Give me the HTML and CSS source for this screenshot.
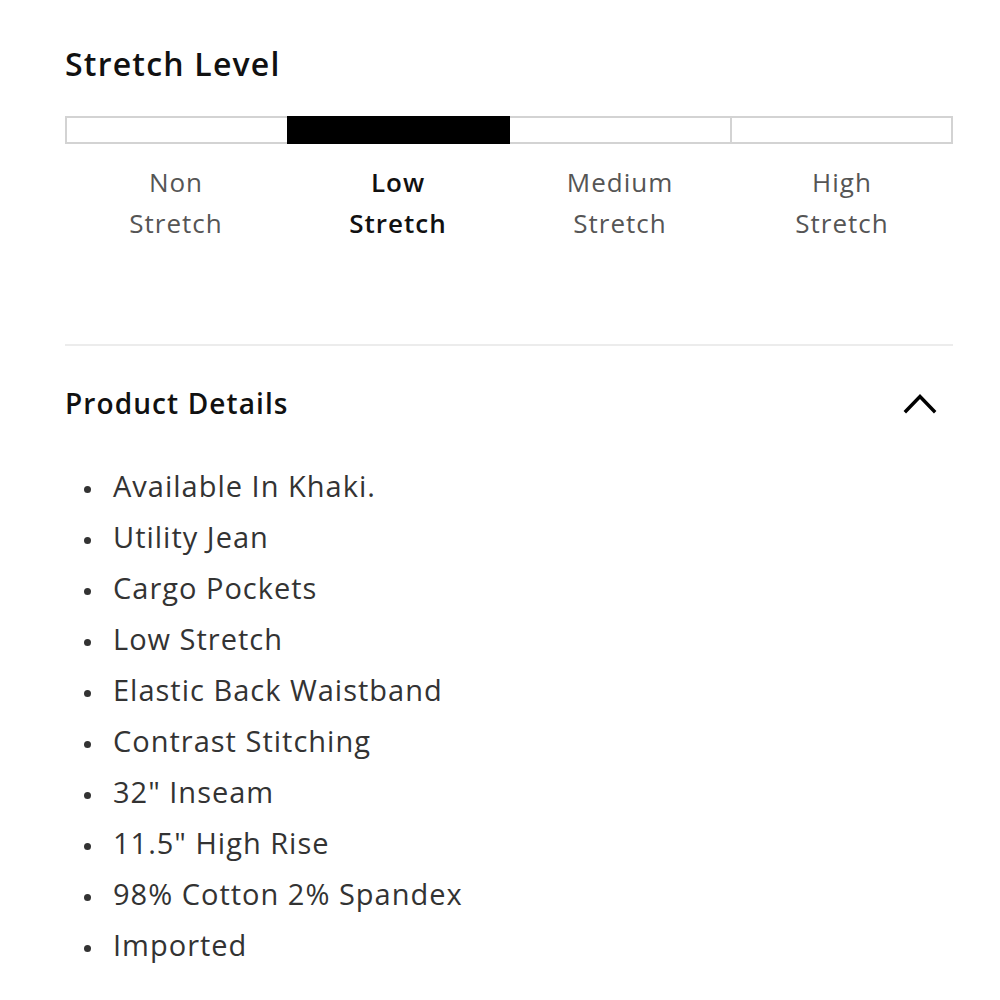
FILE: index.html
```html
<!DOCTYPE html>
<html lang="en">
<head>
<meta charset="utf-8">
<title>Stretch Level</title>
<link rel="stylesheet" href="styles.css">
</head>
<body>
<main class="page">
  <section class="stretch">
    <h2 class="title">Stretch Level</h2>
    <div class="bar">
      <span class="seg"></span>
      <span class="seg seg-active"></span>
      <span class="seg"></span>
      <span class="seg"></span>
    </div>
    <div class="labels">
      <span class="label">Non<br>Stretch</span>
      <span class="label label-active">Low<br>Stretch</span>
      <span class="label">Medium<br>Stretch</span>
      <span class="label">High<br>Stretch</span>
    </div>
  </section>
  <hr class="divider">
  <section class="details">
    <div class="details-head">
      <h2 class="details-title">Product Details</h2>
      <svg class="chevron" width="36" height="24" viewBox="0 0 36 24" aria-hidden="true">
        <polyline points="4,20 18,5.5 32,20" fill="none" stroke="#000" stroke-width="3.4" stroke-linecap="square"/>
      </svg>
    </div>
    <ul class="list">
      <li>Available In Khaki.</li>
      <li>Utility Jean</li>
      <li>Cargo Pockets</li>
      <li>Low Stretch</li>
      <li>Elastic Back Waistband</li>
      <li>Contrast Stitching</li>
      <li>32" Inseam</li>
      <li>11.5" High Rise</li>
      <li>98% Cotton 2% Spandex</li>
      <li>Imported</li>
    </ul>
  </section>
</main>
</body>
</html>
```

FILE: styles.css
```css
html, body {
  margin: 0;
  padding: 0;
  background: #fff;
}

body {
  font-family: "Open Sans", "Lato", sans-serif;
  color: #111;
}

.page {
  padding: 44px 47px 0 65px;
}

.title {
  margin: 0;
  font-size: 32px;
  line-height: 40px;
  font-weight: 600;
  letter-spacing: 1.2px;
  color: #111;
}

.bar {
  display: flex;
  height: 28px;
  margin-top: 32px;
}

.seg {
  flex: 1 1 0;
  box-sizing: border-box;
  border: 2px solid #d3d3d3;
  background: #fff;
}

.seg + .seg {
  margin-left: -2px;
}

.seg-active {
  background: #000;
  border-color: #000;
  position: relative;
  z-index: 1;
}

.labels {
  display: grid;
  grid-template-columns: repeat(4, 1fr);
  margin-top: 18px;
}

.label {
  text-align: center;
  font-size: 26px;
  line-height: 41px;
  letter-spacing: 1px;
  color: #555;
}

.label-active {
  color: #111;
  font-weight: 600;
}

.divider {
  margin: 100px 0 0;
  border: 0;
  height: 2px;
  background: #ececec;
}

.details-head {
  display: flex;
  justify-content: space-between;
  align-items: center;
  margin-top: 37px;
}

.details-title {
  margin: 0;
  font-size: 28px;
  line-height: 40px;
  font-weight: 600;
  letter-spacing: 1.1px;
  color: #111;
}

.chevron {
  margin-right: 15px;
  display: block;
}

.list {
  list-style: none;
  margin: 37px 0 0;
  padding: 0;
}

.list li {
  font-size: 29px;
  line-height: 51px;
  letter-spacing: 1px;
  color: #333;
  padding-left: 19px;
}

.list li::before {
  content: "";
  display: inline-block;
  width: 7px;
  height: 7px;
  border-radius: 50%;
  background: #333;
  margin-right: 22px;
  vertical-align: 4px;
}
```
